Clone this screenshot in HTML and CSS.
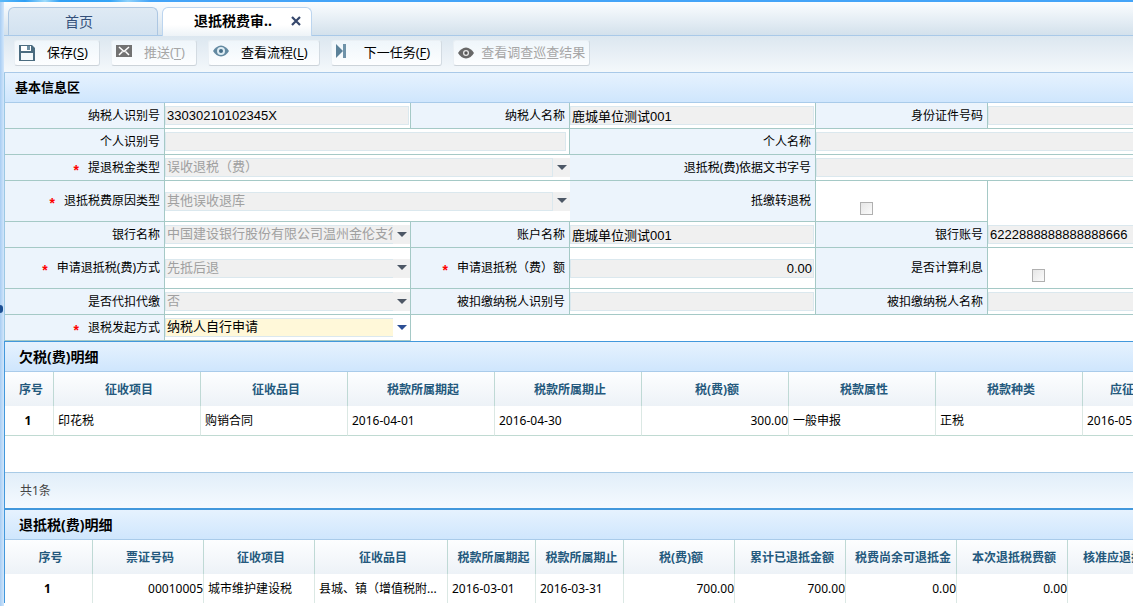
FILE: index.html
```html
<!DOCTYPE html>
<html lang="zh-CN">
<head>
<meta charset="utf-8">
<title>退抵税费审批</title>
<link rel="stylesheet" href="styles.css">
</head>
<body>
<div class="sky"></div>
<div class="app">
  <div class="side"><button class="side-handle" type="button" aria-label="展开"></button></div>
  <div class="main">
    <nav class="tabs">
      <button class="tab" type="button">首页</button>
      <div class="tab tab-active">
        <span>退抵税费审..</span>
        <button class="tab-close" type="button" aria-label="关闭"><svg width="10" height="10" viewBox="0 0 10 10"><path d="M1 1l8 8M9 1L1 9" stroke="#34466b" stroke-width="2.200" fill="none"/></svg></button>
      </div>
    </nav>
    <div class="toolbar">
      <button class="tool" type="button">
        <svg width="16" height="16" viewBox="0 0 16 16"><path d="M0 0h13l3 3v13H0z" fill="#4b6c80"/><path d="M2 1h10v5H2z" fill="#fff"/><path d="M8 1h3v4H8z" fill="#6d8ea2"/><path d="M2 8h12v7H2z" fill="#f4f9fc"/></svg>
        <span class="tool-text">保存(<u>S</u>)</span>
      </button>
      <button class="tool" type="button" disabled>
        <svg class="raised" width="16" height="16" viewBox="0 0 16 16"><path d="M0 2h16v12H0z" fill="#727272"/><path d="M3 4l5 4.500L13 4M3 12l3.500-3.500M13 12L9.500 8.500" stroke="#fff" stroke-width="1.500" fill="none"/></svg>
        <span class="tool-text">推送(<u>T</u>)</span>
      </button>
      <button class="tool" type="button">
        <svg class="raised" width="16" height="16" viewBox="0 0 16 16"><path d="M0 8Q3 3 8 2.500Q13 3 16 8Q13 13 8 13.500Q3 13 0 8z" fill="#6389a1"/><circle cx="8" cy="8" r="4" fill="#dcebf3"/><circle cx="8" cy="8" r="2" fill="#456d87"/></svg>
        <span class="tool-text">查看流程(<u>L</u>)</span>
      </button>
      <button class="tool" type="button">
        <svg class="raised" width="11" height="16" viewBox="0 0 11 16"><path d="M0 1l7 7-7 7z" fill="#5b8199"/><path d="M7 1h3v14H7z" fill="#6f93a9"/></svg>
        <span class="tool-text tool-next">下一任务(<u>F</u>)</span>
      </button>
      <button class="tool tool-tight" type="button" disabled>
        <svg width="16" height="16" viewBox="0 0 16 16"><path d="M0 8Q3 3 8 2.500Q13 3 16 8Q13 13 8 13.500Q3 13 0 8z" fill="#686868"/><circle cx="8" cy="8" r="3" fill="#e8e8e8"/><circle cx="8" cy="8" r="1.700" fill="#555"/></svg>
        <span class="tool-text">查看调查巡查结果</span>
      </button>
    </div>

    <h2 class="title title-form">基本信息区</h2>
    <form class="form">
      <label class="label" for="f1">纳税人识别号</label>
      <div class="cell"><input class="field" id="f1" value="33030210102345X" readonly></div>
      <label class="label" for="f2">纳税人名称</label>
      <div class="cell"><input class="field" id="f2" value="鹿城单位测试001" readonly></div>
      <label class="label" for="f3">身份证件号码</label>
      <div class="cell cell-end"><input class="field" id="f3" readonly></div>

      <label class="label" for="f4">个人识别号</label>
      <div class="cell span2 cell-inset"><input class="field" id="f4" readonly></div>
      <label class="label" for="f5">个人名称</label>
      <div class="cell cell-end span2"><input class="field" id="f5" readonly></div>

      <label class="label" for="f6"><b class="star">*</b>提退税金类型</label>
      <div class="cell span2 cell-open"><div class="pick"><select id="f6" disabled><option>误收退税（费）</option></select><svg class="arrow" width="10" height="6" viewBox="0 0 10 6"><path d="M0 0h10L5 5z"/></svg></div></div>
      <label class="label" for="f7">退抵税(费)依据文书字号</label>
      <div class="cell cell-end span2"><input class="field" id="f7" readonly></div>

      <label class="label tall" for="f8"><b class="star">*</b>退抵税费原因类型</label>
      <div class="cell span2 cell-open"><div class="pick"><select id="f8" disabled><option>其他误收退库</option></select><svg class="arrow" width="10" height="6" viewBox="0 0 10 6"><path d="M0 0h10L5 5z"/></svg></div></div>
      <label class="label" for="f9">抵缴转退税</label>
      <div class="cell cell-check"><input class="check" id="f9" type="checkbox"></div>
      <div class="blank"></div>

      <label class="label" for="f10">银行名称</label>
      <div class="cell cell-pick"><div class="pick"><select id="f10" disabled><option>中国建设银行股份有限公司温州金伦支行</option></select><svg class="arrow" width="10" height="6" viewBox="0 0 10 6"><path d="M0 0h10L5 5z"/></svg></div></div>
      <label class="label" for="f11">账户名称</label>
      <div class="cell"><input class="field" id="f11" value="鹿城单位测试001" readonly></div>
      <label class="label" for="f12">银行账号</label>
      <div class="cell cell-end"><input class="field" id="f12" value="6222888888888888666" readonly></div>

      <label class="label tall" for="f13"><b class="star">*</b>申请退抵税(费)方式</label>
      <div class="cell cell-pick"><div class="pick"><select id="f13" disabled><option>先抵后退</option></select><svg class="arrow" width="10" height="6" viewBox="0 0 10 6"><path d="M0 0h10L5 5z"/></svg></div></div>
      <label class="label" for="f14"><b class="star">*</b>申请退抵税（费）额</label>
      <div class="cell"><input class="field field-num" id="f14" value="0.00" readonly></div>
      <label class="label" for="f15">是否计算利息</label>
      <div class="cell cell-end cell-check"><input class="check" id="f15" type="checkbox"></div>

      <label class="label" for="f16">是否代扣代缴</label>
      <div class="cell cell-pick"><div class="pick"><select id="f16" disabled><option>否</option></select><svg class="arrow" width="10" height="6" viewBox="0 0 10 6"><path d="M0 0h10L5 5z"/></svg></div></div>
      <label class="label" for="f17">被扣缴纳税人识别号</label>
      <div class="cell"><input class="field" id="f17" readonly></div>
      <label class="label" for="f18">被扣缴纳税人名称</label>
      <div class="cell cell-end"><input class="field" id="f18" readonly></div>

      <label class="label" for="f19"><b class="star">*</b>退税发起方式</label>
      <div class="cell cell-pick"><div class="pick pick-on"><select id="f19"><option>纳税人自行申请</option></select><svg class="arrow" width="10" height="6" viewBox="0 0 10 6"><path d="M0 0h10L5 5z"/></svg></div></div>
    </form>

    <section class="panel">
      <h2 class="title">欠税(费)明细</h2>
      <div class="panel-body">
        <table class="grid grid-lined">
          <colgroup><col class="w-no"><col class="w-a"><col class="w-a"><col class="w-a"><col class="w-a"><col class="w-a"><col class="w-a"><col class="w-a"><col></colgroup>
          <thead><tr><th>序号</th><th>征收项目</th><th>征收品目</th><th>税款所属期起</th><th>税款所属期止</th><th>税(费)额</th><th>税款属性</th><th>税款种类</th><th class="cut">应征</th></tr></thead>
          <tbody><tr><td class="no">1</td><td>印花税</td><td>购销合同</td><td>2016-04-01</td><td>2016-04-30</td><td class="num">300.00</td><td>一般申报</td><td>正税</td><td>2016-05</td></tr></tbody>
        </table>
      </div>
      <div class="panel-foot">共1条</div>
    </section>

    <section class="panel panel-second">
      <h2 class="title">退抵税(费)明细</h2>
      <table class="grid">
        <colgroup><col class="w-s"><col class="w-b"><col class="w-b"><col class="w-c"><col class="w-s"><col class="w-s"><col class="w-b"><col class="w-b"><col class="w-b"><col class="w-b"><col></colgroup>
        <thead><tr><th>序号</th><th>票证号码</th><th>征收项目</th><th>征收品目</th><th>税款所属期起</th><th>税款所属期止</th><th>税(费)额</th><th>累计已退抵金额</th><th>税费尚余可退抵金</th><th>本次退抵税费额</th><th class="cut2">核准应退抵</th></tr></thead>
        <tbody><tr><td class="no">1</td><td class="num">00010005</td><td>城市维护建设税</td><td>县城、镇（增值税附...</td><td>2016-03-01</td><td>2016-03-31</td><td class="num">700.00</td><td class="num">700.00</td><td class="num">0.00</td><td class="num">0.00</td><td></td></tr></tbody>
      </table>
    </section>
  </div>
</div>
</body>
</html>
```

FILE: styles.css
```css
* { box-sizing: border-box; }

body {
  margin: 0;
  overflow: hidden;
  background: #fff;
  color: #000;
  font: 12px/18px "Noto Sans", "Noto Sans CJK SC", sans-serif;
}

button, input, select { font: inherit; color: inherit; margin: 0; }

.sky {
  height: 2px;
  background: linear-gradient(90deg, #5ab8f8, #2f9ff5 25px, #9fdcfb 45px, #2f9ff5 60px, #35a5f7 110px, #8fd2fb 128px, #44a4f8 150px);
}

.app {
  display: flex;
  min-height: calc(100vh - 2px);
}

.side {
  flex: none;
  width: 4px;
  display: flex;
  align-items: center;
  padding-top: 10px;
  overflow: hidden;
  background: linear-gradient(90deg, #a8cdf3, #d3e7fb);
}

.side-handle {
  width: 3px;
  height: 8px;
  padding: 0;
  border: 0;
  border-radius: 0 4px 4px 0;
  background: #1c4f93;
}

.main { flex: 1; min-width: 0; }

/* tabs */
.tabs {
  display: flex;
  align-items: flex-end;
  gap: 4px;
  height: 34px;
  padding-left: 4px;
  border-bottom: 1px solid #a9c9e8;
  background: linear-gradient(#fbfdff, #d3e1ec);
}

.tab {
  display: flex;
  align-items: center;
  justify-content: center;
  width: 150px;
  height: 28px;
  padding: 0 8px 0 0;
  border: 1px solid #adc7e2;
  border-bottom: 0;
  border-radius: 6px 6px 0 0;
  background: linear-gradient(#dfeaf4, #d2e2f0);
  color: #34507a;
  font-size: 14px;
}

.tab-active {
  justify-content: space-between;
  height: 29px;
  margin-bottom: -1px;
  padding: 0 10px 2px 31px;
  border-color: #bcd5ef;
  background: linear-gradient(#fff 60%, #edf3f7);
  color: #000;
  font-weight: bold;
}

.tab-close {
  display: flex;
  padding: 0;
  border: 0;
  background: none;
}

/* toolbar */
.toolbar {
  display: flex;
  align-items: center;
  gap: 11px;
  height: 37px;
  padding: 0 10px 2px;
  border-bottom: 1px solid #a9c9e8;
  background: linear-gradient(#dce7f0, #f4f8fb);
}

.tool {
  display: flex;
  align-items: center;
  height: 26px;
  padding: 0 11px 0 4px;
  border: 1px solid #eaf0f5;
  border-right-color: #d3dbe2;
  border-bottom-color: #ccd3d9;
  border-radius: 3px;
  background: linear-gradient(#eff6fb, #fdfeff);
  font-size: 13px;
  white-space: nowrap;
}

.tool:disabled { color: #a6a6a6; }
.raised { margin-bottom: 4px; }
.tool-text { margin-left: 12px; padding-bottom: 2px; }
.tool-next { margin-left: 17px; }
.tool-tight { padding-right: 4px; }
.tool-tight .tool-text { margin-left: 7px; }
.tool u { text-underline-offset: 2px; }

/* section titles */
.title {
  margin: 0;
  height: 30px;
  padding-left: 14px;
  border-bottom: 1px solid #a9cbea;
  background: linear-gradient(#e6f2fe, #cfe6fd);
  font-size: 14px;
  line-height: 29px;
}

.title-form { padding-left: 10px; border-left: 1px solid #9cc8e4; font-size: 13px; }

/* form */
.form {
  display: grid;
  grid-template-columns: minmax(0, 160fr) minmax(0, 246fr) minmax(0, 159fr) minmax(0, 246fr) minmax(0, 172fr) minmax(0, 145fr);
  border-left: 1px solid #9cc8e4;
}

.label, .cell {
  display: flex;
  align-items: center;
  min-height: 26px;
  border-right: 1px solid #a5c9c6;
  border-bottom: 1px solid #a5c9c6;
}

.label {
  justify-content: flex-end;
  padding-right: 4px;
  background: #ecf4fc;
  white-space: nowrap;
}

.tall { min-height: 41px; }
.star { margin-right: 9px; color: #f00; font: bold 14px/10px "Liberation Sans", sans-serif; padding-top: 4px; }
.cell { padding-right: 1px; }
.cell-inset { padding-right: 3px; }
.cell-pick { padding-right: 0; }
.cell-open { padding-right: 0; border-right: 0; }
.cell-end { padding-right: 0; border-right: 0; }
.cell-end .field { border-right: 0; }
.cell-check { align-items: flex-start; padding: 21px 0 0 44px; }
.span2 { grid-column: span 2; }

.field {
  width: 100%;
  height: 19px;
  padding: 0 1px;
  border: 1px solid #dbe8ee;
  border-radius: 0;
  background: #f0f0f0;
  font: 13px/17px "Liberation Sans", "Noto Sans CJK SC", sans-serif;
}

.field-num { text-align: right; }

.check {
  appearance: none;
  width: 13px;
  height: 13px;
  border: 1px solid #b0b0b0;
  background: linear-gradient(135deg, #e6e6e6, #fbfbfb);
}

.pick {
  display: grid;
  grid-template-columns: minmax(0, 1fr) 17px;
  align-items: center;
  width: 100%;
  background: #f0f0f0;
}

.pick select {
  appearance: none;
  height: 19px;
  padding: 0 0 2px 1px;
  border: 1px solid #dbe8ee;
  border-right: 0;
  border-radius: 0;
  background: #f0f0f0;
  color: #a0a0a0;
  font: 13px/15px "Liberation Sans", "Noto Sans CJK SC", sans-serif;
  text-overflow: clip;
  opacity: 1;
}

.cell-open select { border-right: 1px solid #dbe8ee; }
.arrow { margin-left: 4px; fill: #4d5765; }
.pick-on { background: #fff; }
.pick-on select { background: #fff8d9; color: #000; }
.pick-on .arrow { fill: #2c4f95; }

/* detail panels */
.panel { border-top: 1px solid #4298dc; border-left: 1px solid #4298dc; }
.panel-second { border-top-width: 2px; }
.panel-body { height: 100px; }

.panel-foot {
  height: 36px;
  padding-left: 15px;
  border-top: 1px solid #a9cbe6;
  background: linear-gradient(#e1eef9, #f5faff);
  color: #444;
  line-height: 36px;
}

.grid {
  width: 100%;
  table-layout: fixed;
  border-collapse: separate;
  border-spacing: 0;
}

.w-no { width: 49px; }
.w-a { width: 147px; }
.w-s { width: 88px; }
.w-b { width: 111px; }
.w-c { width: 133px; }

.grid th, .grid td {
  padding: 0 0 0 4px;
  border-right: 1px solid #dbe8e4;
  overflow: hidden;
  white-space: nowrap;
  text-align: left;
}

.grid th {
  height: 34px;
  padding-top: 2px;
  border-right-color: #bfd9d5;
  background: linear-gradient(#fdfeff, #edf2f7);
  color: #24597d;
  text-align: center;
}

.grid td { height: 29px; }
.grid-lined td { height: 30px; border-bottom: 1px solid #c0dad2; }
.grid th:last-child, .grid td:last-child { border-right: 0; }
.grid .num { padding: 0; text-align: right; }
.grid .no { padding: 0 2px 0 0; text-align: center; font-weight: bold; }
.grid .cut { padding-left: 27px; text-align: left; }
.grid .cut2 { padding-left: 15px; text-align: left; }
```
